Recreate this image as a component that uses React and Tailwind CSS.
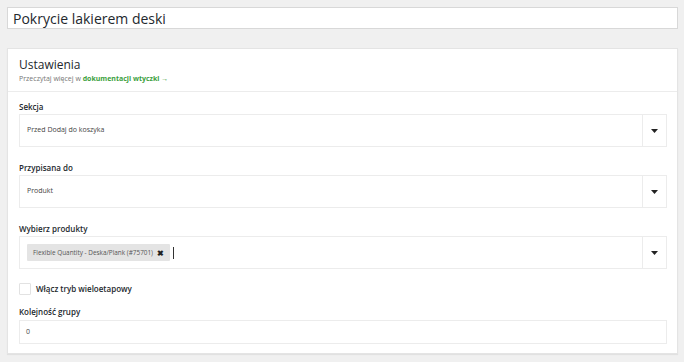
const font = { fontFamily: '"Open Sans", "Noto Sans", sans-serif' };

function Arrow() {
    return (
        <div className="w-[24px] h-full border-l border-[#ececec] flex items-center justify-center">
            <svg width="7" height="4" viewBox="0 0 7 4">
                <path d="M0 0 H7 L3.5 4 Z" fill="#222" />
            </svg>
        </div>
    );
}

function Field({ label, children, className = "" }) {
    return (
        <div className={className}>
            <div className="h-[10px] leading-[10px] text-[8px] font-semibold text-[#23282d] mb-[2px]">{label}</div>
            {children}
        </div>
    );
}

function Select({ children }) {
    return (
        <div className="h-[33px] border border-[#ececec] bg-white flex items-center">
            <div className="flex-1 flex items-center pl-[7px] h-full">{children}</div>
            <Arrow />
        </div>
    );
}

export default function App() {
    return (
        <div className="w-[684px] h-[362px] bg-[#f0f0f0] pt-[7px] pl-[7px] pr-[6px]" style={font}>
            {/* Title */}
            <div className="h-[22px] border border-[#d8d8d8] bg-white flex items-center pl-[5px] text-[14px] text-[#23282d]">
                Pokrycie lakierem deski
            </div>

            {/* Panel */}
            <div className="mt-[19px] bg-white border border-[#e4e4e4] shadow-[0_1px_1px_rgba(0,0,0,0.06)]">
                <div className="h-[43px] border-b border-[#ececec] px-[11px] pt-[8px]">
                    <div className="text-[12px] leading-[16px] text-[#23282d]">Ustawienia</div>
                    <div className="text-[7px] leading-[10px] text-[#777] mt-[1px]">
                        Przeczytaj więcej w <span className="font-bold text-[#3c9f40]">dokumentacji wtyczki</span> <span className="text-[#3c9f40]">→</span>
                    </div>
                </div>

                <div className="pl-[11px] pr-[10px] pt-[10px] pb-[9px]">
                    <Field label="Sekcja">
                        <Select>
                            <span className="text-[7px] text-[#444]">Przed Dodaj do koszyka</span>
                        </Select>
                    </Field>

                    <Field label="Przypisana do" className="mt-[16px]">
                        <Select>
                            <span className="text-[7px] text-[#444]">Produkt</span>
                        </Select>
                    </Field>

                    <Field label="Wybierz produkty" className="mt-[16px]">
                        <Select>
                            <div className="h-[17px] bg-[#e4e4e4] rounded-[1px] flex items-center pl-[6px] pr-[6px] gap-[4px]">
                                <span className="text-[6.4px] text-[#555]">Flexible Quantity - Deska/Plank (#75701)</span>
                                <span className="text-[8px] font-bold text-[#222] leading-none">✖</span>
                            </div>
                            <div className="w-px h-[12px] bg-[#333] ml-[3px]" />
                        </Select>
                    </Field>

                    <div className="mt-[14px] flex items-center h-[12px]">
                        <div className="w-[12px] h-[12px] border border-[#e2e2e2] rounded-[1px] bg-white" />
                        <span className="ml-[5px] text-[8px] font-semibold text-[#23282d]">Włącz tryb wieloetapowy</span>
                    </div>

                    <div className="mt-[12px]">
                        <div className="h-[10px] leading-[10px] text-[8px] font-semibold text-[#23282d] mb-[3px]">Kolejność grupy</div>
                        <div className="h-[24px] border border-[#ececec] flex items-center pl-[6px] text-[7px] text-[#444]">0</div>
                    </div>
                </div>
            </div>
        </div>
    );
}
